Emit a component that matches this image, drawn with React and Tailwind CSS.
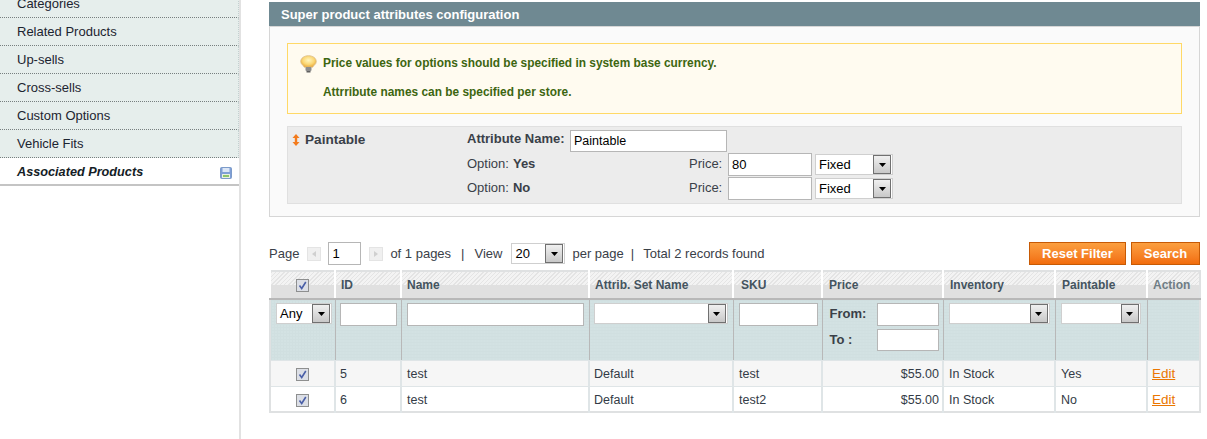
import React from "react";

const SIDE_ITEMS = ["Related Products", "Up-sells", "Cross-sells", "Custom Options", "Vehicle Fits"];

const ROWS = [
  { id: "5", sku: "test", paintable: "Yes", bg: "bg-[#f6f6f6]" },
  { id: "6", sku: "test2", paintable: "No", bg: "bg-white" },
];

function SaveIcon() {
  return (
    <svg width="12" height="12" viewBox="0 0 12 12" className="shrink-0">
      <rect x="0.5" y="0.5" width="11" height="11" rx="1" fill="#7f9fd6" stroke="#7c9bc9" />
      <rect x="2.5" y="1" width="7" height="4" fill="#dbe6f6" />
      <rect x="2" y="7" width="8" height="4" fill="#e8f0e0" />
      <rect x="3" y="8" width="6" height="2" fill="#8cc46a" />
    </svg>
  );
}

function Bulb() {
  return (
    <svg width="17" height="18" viewBox="0 0 17 18" className="shrink-0">
      <defs>
        <radialGradient id="bulbFill" cx="50%" cy="40%" r="60%">
          <stop offset="0%" stopColor="#fff6c0" />
          <stop offset="60%" stopColor="#fbd774" />
          <stop offset="100%" stopColor="#e8a93c" />
        </radialGradient>
      </defs>
      <path
        d="M8.500 0.7C4 0.7 0.7 3.200 0.7 6.600c0 2.600 2.600 3.600 3.600 5.600h8.400c1-2 3.600-3 3.600-5.600 0-3.400-3.300-5.900-7.800-5.900z"
        fill="url(#bulbFill)"
        stroke="#dcbf8a"
        strokeWidth="0.8"
      />
      <rect x="5.500" y="12" width="6" height="4" rx="1" fill="#8d8d8d" />
      <rect x="6.500" y="16" width="4" height="1.500" fill="#5f5f5f" />
    </svg>
  );
}

function SortArrows() {
  return (
    <svg width="8" height="12" viewBox="0 0 8 12" className="shrink-0">
      <path d="M4 0L7.500 4H5.200V8H7.500L4 12L0.500 8H2.800V4H0.500z" fill="#f37b1d" />
    </svg>
  );
}

function Check() {
  return (
    <span className="flex h-[13px] w-[13px] items-center justify-center border border-[#8e8f8f] bg-[#dcdfe6]">
      <svg width="9" height="9" viewBox="0 0 9 9">
        <path d="M1.500 4.500L3.700 7.500L7.800 1" fill="none" stroke="#4a5fa8" strokeWidth="1.600" />
      </svg>
    </span>
  );
}

function Select({ value = "", className = "" }) {
  return (
    <div className={`flex items-center justify-between border border-[#cfcfcf] bg-white pl-[3px] pr-[1px] text-[13px] leading-none text-black ${className}`}>
      <span>{value}</span>
      <span className="flex h-[19px] w-[18px] items-center justify-center border border-[#707070] bg-gradient-to-b from-[#f0f0f0] to-[#c8c8c8]">
        <svg width="7" height="4" viewBox="0 0 7 4">
          <path d="M0 0H7L3.500 4z" fill="#000" />
        </svg>
      </span>
    </div>
  );
}

function Input({ value = "", className = "" }) {
  return (
    <div className={`flex items-center border border-[#b6b6b6] bg-white px-[3px] text-[12.5px] leading-none text-black ${className}`}>
      {value}
    </div>
  );
}

function Pager({ dir }) {
  return (
    <span className="flex h-[14px] w-[14px] items-center justify-center border border-[#e4e4e4] bg-[#f0f0f0]">
      <svg width="4" height="6" viewBox="0 0 4 6">
        <path d={dir === "prev" ? "M4 0V6L0 3z" : "M0 0V6L4 3z"} fill="#d0d0d0" />
      </svg>
    </span>
  );
}

function OrangeButton({ children, className = "" }) {
  return (
    <button className={`h-[23px] border border-[#c75a05] bg-gradient-to-b from-[#fb9f3f] to-[#f26d0b] text-[13px] font-bold leading-none text-white ${className}`}>
      {children}
    </button>
  );
}

function Th({ children, className = "", color = "text-[#44545f]" }) {
  return (
    <th className={`h-[28px] border-b-2 border-l-2 border-b-[#b8b8b8] border-l-white bg-[linear-gradient(180deg,transparent_50%,#e0e0e0_50%),repeating-linear-gradient(135deg,#e4e4e4_0px,#e4e4e4_1px,#f3f3f3_1px,#f3f3f3_3px)] text-left align-middle text-[12px] font-bold ${color} ${className}`}>
      {children}
    </th>
  );
}

function Fd({ children, className = "pl-[5px]" }) {
  return (
    <td className={`h-[61px] border-l border-[#b8b8b8] bg-[#d3e2e3] bg-[linear-gradient(#d0dfe0_1px,transparent_1px),linear-gradient(90deg,#d0dfe0_1px,transparent_1px)] bg-[length:3px_3px] pr-[4px] pt-[3px] align-top first:border-l-0 ${className}`}>
      {children}
    </td>
  );
}

function Td({ children, className = "pl-[5px] pr-[5px]" }) {
  return (
    <td className={`border-l-2 border-[#dfe5e7] pt-[3px] text-[12.5px] text-[#333b46] first:border-l-0 ${className}`}>
      {children}
    </td>
  );
}

function AttrOption({ name, price }) {
  return (
    <div className="flex h-[24px] items-start">
      <span className="flex h-[22px] w-[222px] items-center gap-[4px]">
        Option: <b>{name}</b>
      </span>
      <span className="flex h-[22px] w-[33px] items-center">Price:</span>
      <Input value={price} className="ml-[6px] h-[23px] w-[84px] text-[13px]" />
      <Select value="Fixed" className="ml-[3px] mt-[1px] h-[21px] w-[78px]" />
    </div>
  );
}

export default function App() {
  return (
    <div className="flex h-[439px] w-[1207px] overflow-hidden bg-white font-['Liberation_Sans',Arial,sans-serif]">
      {/* Product tabs */}
      <aside className="w-[241px] shrink-0 border-r-2 border-[#e2e2e2] text-[13px] text-[#1c2430]">
        <div className="-mt-[10px] flex h-[28px] items-center border-b border-r border-dotted border-b-[#777f7f] border-r-[#c3d0d0] bg-[#e6eeec] pl-[17px] pt-[1px]">
          Categories
        </div>
        {SIDE_ITEMS.map((label) => (
          <div
            key={label}
            className="flex h-[28px] items-center border-b border-r border-dotted border-b-[#777f7f] border-r-[#c3d0d0] bg-[#e6eeec] pl-[17px] pt-[1px] last:border-b-2"
          >
            {label}
          </div>
        ))}
        <div className="flex h-[28px] items-center justify-between border-b-2 border-[#c4c4c4] bg-white pl-[17px] pr-[7px] pt-[3px] text-[12.7px] font-bold italic text-[#141c26]">
          Associated Products
          <SaveIcon />
        </div>
      </aside>

      <main className="ml-[28px] flex w-[931px] shrink-0 flex-col pt-[2px]">
        {/* Configuration fieldset */}
        <h4 className="flex h-[24px] items-center bg-[#6f8992] pl-[12px] pt-[1px] text-[13px] font-bold text-white">
          Super product attributes configuration
        </h4>
        <section className="flex h-[191px] flex-col border border-[#d6d6d6] bg-[#fafafa] px-[17px] pt-[16px]">
          <div className="h-[71px] border border-[#ffd967] bg-[#fffbf0] pl-[12px] pt-[11px] text-[11.9px] font-bold text-[#3d6611]">
            <div className="flex h-[18px] items-center gap-[6px]">
              <Bulb />
              Price values for options should be specified in system base currency.
            </div>
            <div className="mt-[11px] pl-[23px]">Attrribute names can be specified per store.</div>
          </div>
          <div className="mt-[12px] flex h-[78px] border border-[#e0e0e0] bg-[#ececec] pl-[4px] pt-[3px] text-[13px] text-[#3a4048]">
            <div className="mt-[1px] flex h-[18px] w-[175px] shrink-0 items-center gap-[5px] text-[13.6px] font-bold">
              <SortArrows />
              Paintable
            </div>
            <div className="flex flex-col">
              <div className="flex h-[23px] items-start">
                <span className="flex h-[18px] w-[103px] items-center font-bold">Attribute Name:</span>
                <Input value="Paintable" className="h-[22px] w-[157px]" />
              </div>
              <AttrOption name="Yes" price="80" />
              <AttrOption name="No" price="" />
            </div>
          </div>
        </section>

        {/* Grid toolbar */}
        <div className="mt-[24px] flex h-[25px] items-center text-[13px] text-[#3a4048]">
          <span>Page</span>
          <span className="ml-[8px]"><Pager dir="prev" /></span>
          <Input value="1" className="ml-[7px] h-[23px] w-[33px] text-[13px]" />
          <span className="ml-[8px]"><Pager dir="next" /></span>
          <span className="ml-[7px]">of 1 pages</span>
          <span className="ml-[10px]">|</span>
          <span className="ml-[10px]">View</span>
          <Select value="20" className="ml-[9px] h-[21px] w-[54px]" />
          <span className="ml-[7px]">per page</span>
          <span className="ml-[7px]">|</span>
          <span className="ml-[9px]">Total 2 records found</span>
          <div className="ml-auto flex gap-[5px]">
            <OrangeButton className="w-[97px]">Reset Filter</OrangeButton>
            <OrangeButton className="w-[69px]">Search</OrangeButton>
          </div>
        </div>

        {/* Products grid */}
        <table className="mt-[4px] w-[930px] table-fixed border-collapse border-2 border-[#dfe1e2]">
          <colgroup>
            <col className="w-[65px]" />
            <col className="w-[66px]" />
            <col className="w-[188px]" />
            <col className="w-[144px]" />
            <col className="w-[89px]" />
            <col className="w-[121px]" />
            <col className="w-[112px]" />
            <col className="w-[92px]" />
            <col className="w-[53px]" />
          </colgroup>
          <thead>
            <tr>
              <Th className="border-l-0">
                <div className="flex justify-center"><Check /></div>
              </Th>
              <Th className="pl-[5px]">ID</Th>
              <Th className="pl-[5px]">Name</Th>
              <Th className="pl-[5px]">Attrib. Set Name</Th>
              <Th className="pl-[7px]">SKU</Th>
              <Th className="pl-[6px]">Price</Th>
              <Th className="pl-[6px]">Inventory</Th>
              <Th className="pl-[6px]">Paintable</Th>
              <Th className="pl-[5px]" color="text-[#6f7d85]">Action</Th>
            </tr>
            <tr>
              <Fd><Select value="Any" className="h-[21px] w-[56px]" /></Fd>
              <Fd className="pl-[4px]"><Input className="h-[23px] w-[57px]" /></Fd>
              <Fd><Input className="h-[23px] w-[177px]" /></Fd>
              <Fd className="pl-[4px]"><Select className="h-[21px] w-[134px]" /></Fd>
              <Fd><Input className="h-[23px] w-[79px]" /></Fd>
              <Fd className="pl-[7px]">
                <div className="flex h-[23px] items-center justify-between pb-[1px] text-[13px] font-bold text-[#3a4048]">
                  From:
                  <Input className="h-[23px] w-[62px]" />
                </div>
                <div className="mt-[3px] flex h-[22px] items-center justify-between text-[13px] font-bold text-[#3a4048]">
                  To :
                  <Input className="h-[22px] w-[62px]" />
                </div>
              </Fd>
              <Fd><Select className="h-[21px] w-[101px]" /></Fd>
              <Fd><Select className="h-[21px] w-[80px]" /></Fd>
              <Fd />
            </tr>
          </thead>
          <tbody>
            {ROWS.map((r) => (
              <tr key={r.id} className={`h-[26px] border-t border-[#dfe5e7] ${r.bg}`}>
                <Td><div className="flex justify-center"><Check /></div></Td>
                <Td className="pl-[4px]">{r.id}</Td>
                <Td>test</Td>
                <Td className="pl-[4px]">Default</Td>
                <Td>{r.sku}</Td>
                <Td className="pr-[3px] text-right">$55.00</Td>
                <Td>In Stock</Td>
                <Td>{r.paintable}</Td>
                <Td className="pl-[4px]"><a href="#" className="text-[13.5px] text-[#ea7601] underline">Edit</a></Td>
              </tr>
            ))}
          </tbody>
        </table>
      </main>
    </div>
  );
}
